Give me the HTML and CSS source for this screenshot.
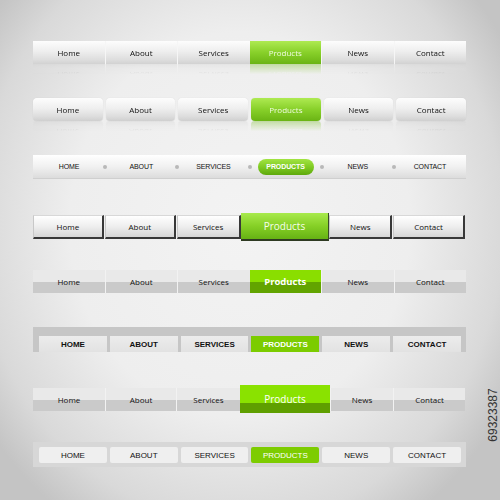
FILE: index.html
```html
<!DOCTYPE html>
<html>
<head>
	<meta charset="utf-8" />
	<title>Navigation bars</title>
	<link rel="stylesheet" href="styles.css">
</head>
<body>
	<div class="page">
		<!-- glossy bar -->
		<ul class="nav glass">
			<li>Home</li><li>About</li><li>Services</li><li class="on">Products</li><li>News</li><li>Contact</li>
		</ul>

		<!-- separate rounded buttons -->
		<ul class="nav pills">
			<li>Home</li><li>About</li><li>Services</li><li class="on">Products</li><li>News</li><li>Contact</li>
		</ul>

		<!-- caps with dot separators -->
		<ul class="nav dots">
			<li>HOME</li><li>ABOUT</li><li>SERVICES</li><li class="on"><span>PRODUCTS</span></li><li>NEWS</li><li>CONTACT</li>
		</ul>

		<!-- raised keys -->
		<ul class="nav keys">
			<li class="w71">Home</li><li class="w71">About</li><li class="w63">Services</li><li class="on">Products</li><li class="w63">News</li><li class="w72">Contact</li>
		</ul>

		<!-- two tone flat -->
		<ul class="nav split">
			<li>Home</li><li>About</li><li>Services</li><li class="on">Products</li><li>News</li><li>Contact</li>
		</ul>

		<!-- tabs in a frame -->
		<ul class="nav tabs">
			<li>HOME</li><li>ABOUT</li><li>SERVICES</li><li class="on">PRODUCTS</li><li>NEWS</li><li>CONTACT</li>
		</ul>

		<!-- two tone with big current item -->
		<ul class="nav split big">
			<li class="w72">Home</li><li class="w71">About</li><li class="w64">Services</li><li class="on">Products</li><li class="w63">News</li><li class="w72">Contact</li>
		</ul>

		<!-- flat boxed tabs -->
		<ul class="nav boxes">
			<li>HOME</li><li>ABOUT</li><li>SERVICES</li><li class="on">PRODUCTS</li><li>NEWS</li><li>CONTACT</li>
		</ul>
	</div>
	<div class="stock-id">69323387</div>
</body>
</html>
```

FILE: styles.css
```css
html, body {
	margin: 0;
	width: 500px;
	height: 500px;
	overflow: hidden;
}
body {
	position: relative;
	background: radial-gradient(ellipse 62% 70% at 48% 45%, #f3f3f3 0%, #eeeeee 55%, #d9d9d9 85%, #c4c4c4 100%);
	font-family: 'Open Sans', 'Liberation Sans', sans-serif;
	color: #111;
}
.page {
	padding: 41px 0 0 33px;
}
.nav {
	list-style: none;
	margin: 0;
	padding: 0;
	width: 433px;
	display: flex;
}
.nav li {
	display: flex;
	align-items: center;
	justify-content: center;
	box-sizing: border-box;
}

/* glossy bar */
.glass {
	height: 23px;
	-webkit-box-reflect: below 0 linear-gradient(transparent 55%, rgba(255, 255, 255, 0.35));
}
.glass li {
	flex: 1;
	font-size: 8px;
	background: linear-gradient(#fdfdfd, #eeeeee 45%, #dedede 80%, #d2d2d2);
}
.glass li + li {
	border-left: 1px solid #f6f6f6;
}
.glass li.on,
.pills li.on {
	color: #effbe0;
	background: linear-gradient(#aeea52, #88d02a 50%, #6ab414);
	border-left: 0;
}

/* rounded buttons */
.pills {
	margin-top: 34px;
	height: 23px;
	gap: 3px;
	-webkit-box-reflect: below 0 linear-gradient(transparent 55%, rgba(255, 255, 255, 0.35));
}
.pills li {
	flex: 1;
	font-size: 8px;
	border-radius: 4px;
	background: linear-gradient(#fdfdfd, #efefef 45%, #dddddd 80%, #cfcfcf);
	box-shadow: 0 0 1px rgba(0, 0, 0, 0.15);
}

/* caps with dots */
.dots {
	margin-top: 34px;
	height: 24px;
	background: linear-gradient(#ffffff, #f1f1f1 50%, #dcdcdc);
	border-bottom: 1px solid #cfcfcf;
	box-sizing: border-box;
}
.dots li {
	flex: 1;
	position: relative;
	font-family: 'Liberation Sans', Arial, sans-serif;
	font-size: 7px;
	letter-spacing: -0.1px;
	color: #111;
}
.dots li + li::before {
	content: '';
	position: absolute;
	left: -2px;
	top: 10px;
	width: 4px;
	height: 4px;
	border-radius: 50%;
	background: #b9b9b9;
}
.dots li.on span {
	display: flex;
	align-items: center;
	justify-content: center;
	width: 56px;
	height: 16px;
	border-radius: 8px;
	font-weight: bold;
	color: #fff;
	background: linear-gradient(#a2e442, #7cc820 55%, #5ea80c);
}

/* raised keys */
.keys {
	margin-top: 34px;
	height: 28px;
	align-items: center;
}
.keys li {
	height: 24px;
	font-size: 8px;
	margin-right: 1px;
	background: linear-gradient(#ffffff, #eeeeee 50%, #d6d6d6);
	border-top: 1px solid #d8d8d8;
	border-left: 1px solid #c8c8c8;
	border-right: 2px solid #383838;
	border-bottom: 2px solid #383838;
}
.keys li.on {
	width: 89px;
	height: 28px;
	margin-right: 0;
	font-size: 10px;
	color: #f6fdec;
	background: linear-gradient(#a8ea4c, #86d026 50%, #66b214);
	border: 0;
	border-bottom: 2px solid #2e3a22;
	border-right: 1px solid #3a4a2a;
}
.w63 { width: 63px; }
.w64 { width: 64px; }
.w71 { width: 71px; }
.w72 { width: 72px; }
.keys li.w63:nth-child(3) { margin-right: 0; width: 64px; }

/* two tone */
.split {
	margin-top: 29px;
	height: 23px;
}
.split li {
	flex: 1;
	font-size: 8px;
	color: #111;
	background: linear-gradient(#e9e9e9 50%, #cacaca 50%);
}
.split li + li {
	border-left: 1px solid #f2f2f2;
}
.split li.on {
	color: #fff;
	font-weight: bold;
	font-size: 9.5px;
	border-left: 0;
	background: linear-gradient(#8ade00 50%, #62a400 50%);
}
.split.big {
	margin-top: 33px;
	height: 28px;
	align-items: center;
}
.split.big li {
	flex: none;
	height: 23px;
}
.split.big li.on {
	width: 90px;
	height: 28px;
	font-weight: normal;
	font-size: 10px;
	background: linear-gradient(#8ae200 64%, #5f9f00 64%);
}

/* framed tabs */
.tabs {
	margin-top: 34px;
	height: 25px;
	padding: 9px 5px 0 6px;
	gap: 3px;
	background: #c6c6c6;
	box-sizing: border-box;
}
.tabs li {
	flex: 1;
	font-family: 'Liberation Sans', Arial, sans-serif;
	font-weight: bold;
	font-size: 8px;
	color: #111;
	background: linear-gradient(#ececec, #e2e2e2);
}
.tabs li.on {
	color: #fff;
	background: #7ccc00;
}

/* boxed flat tabs */
.boxes {
	margin-top: 29px;
	height: 25px;
	padding: 5px 5px 4px 6px;
	gap: 3px;
	background: #d7d7d7;
	box-sizing: border-box;
}
.boxes li {
	flex: 1;
	font-family: 'Liberation Sans', Arial, sans-serif;
	font-size: 8px;
	color: #111;
	border-radius: 2px;
	background: #efefef;
}
.boxes li.on {
	color: #fff;
	background: #7dcc00;
}

/* stock number along the right edge */
.stock-id {
	position: absolute;
	right: -19px;
	top: 408px;
	transform: rotate(-90deg);
	font-family: 'Liberation Sans', Arial, sans-serif;
	font-size: 12px;
	color: #333;
}
```
